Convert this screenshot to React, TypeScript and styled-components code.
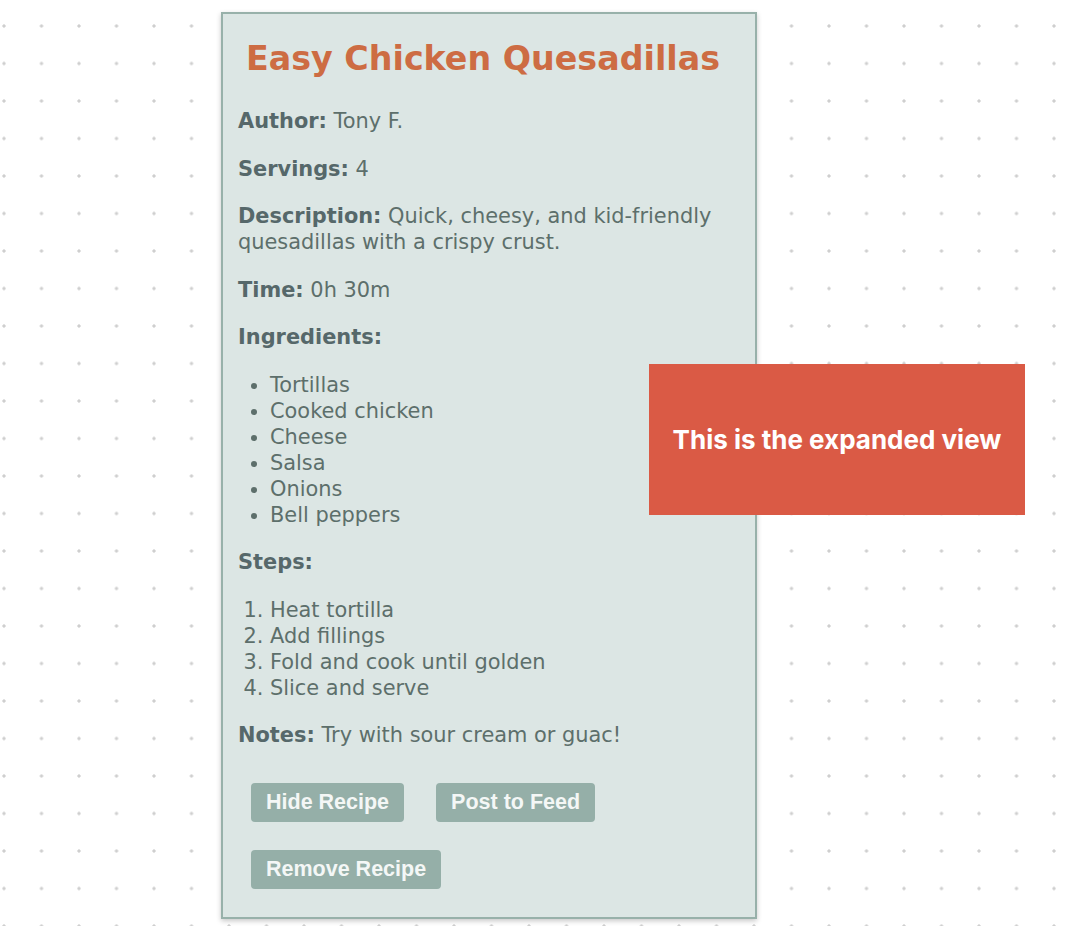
import React from "react";
import styled, { createGlobalStyle } from "styled-components";

const Global = createGlobalStyle`
  html, body {
    margin: 0;
    padding: 0;
  }
  body {
    background-color: #ffffff;
    background-image: radial-gradient(circle, #cfcfcf 1.4px, transparent 1.8px);
    background-size: 37.5px 37.5px;
    background-position: -14.75px 7.25px;
    min-height: 926px;
    font-family: "DejaVu Sans", "Liberation Sans", sans-serif;
  }
`;

const Page = styled.div`
  position: relative;
  width: 1088px;
  min-height: 926px;
  padding: 12px 0 0 221px;
  box-sizing: border-box;
`;

const Card = styled.article`
  width: 536px;
  box-sizing: border-box;
  background: #dce6e4;
  border: 2px solid #98b1aa;
  box-shadow: 0 2px 5px rgba(0, 0, 0, 0.22);
  padding: 22px 15px 28px 15px;
  color: #5d6f6b;
  font-size: 20.9px;
  line-height: 26px;
`;

const Title = styled.h1`
  margin: 0 0 26px 0;
  text-align: center;
  font-size: 33.3px;
  line-height: 46px;
  font-weight: bold;
  color: #cd6c43;
  padding-right: 12px;
`;

const Field = styled.p`
  margin: 0 0 21.5px 0;
`;

const Label = styled.strong`
  font-weight: bold;
  color: #56686a;
`;

const List = styled.ul<{ $ordered?: boolean }>`
  margin: 0 0 21.5px 0;
  padding-left: 32px;
  list-style: ${(p) => (p.$ordered ? "decimal" : "disc")};
`;

const Buttons = styled.div`
  display: flex;
  flex-wrap: wrap;
  gap: 28px 32px;
  margin-top: 35px;
  padding-left: 13px;
  width: 380px;
`;

const Button = styled.button`
  background: #95afa8;
  color: #f4f7f6;
  border: none;
  border-radius: 4px;
  height: 39px;
  padding: 0 15px;
  font-family: "Liberation Sans", Arial, sans-serif;
  font-weight: bold;
  font-size: 21.5px;
  cursor: pointer;
`;

const Overlay = styled.div`
  position: absolute;
  left: 649px;
  top: 364px;
  width: 376px;
  height: 151px;
  background: #da5a45;
  color: #ffffff;
  display: flex;
  align-items: center;
  justify-content: center;
  font-family: Inter, "Liberation Sans", sans-serif;
  font-weight: 700;
  font-size: 26px;
`;

const ingredients = [
  "Tortillas",
  "Cooked chicken",
  "Cheese",
  "Salsa",
  "Onions",
  "Bell peppers",
];

const steps = [
  "Heat tortilla",
  "Add fillings",
  "Fold and cook until golden",
  "Slice and serve",
];

export default function App() {
  return (
    <>
      <Global />
      <Page>
        <Card>
          <Title>Easy Chicken Quesadillas</Title>
          <Field>
            <Label>Author:</Label> Tony F.
          </Field>
          <Field>
            <Label>Servings:</Label> 4
          </Field>
          <Field>
            <Label>Description:</Label> Quick, cheesy, and kid-friendly
            quesadillas with a crispy crust.
          </Field>
          <Field>
            <Label>Time:</Label> 0h 30m
          </Field>
          <Field>
            <Label>Ingredients:</Label>
          </Field>
          <List>
            {ingredients.map((i) => (
              <li key={i}>{i}</li>
            ))}
          </List>
          <Field>
            <Label>Steps:</Label>
          </Field>
          <List as="ol" $ordered>
            {steps.map((s) => (
              <li key={s}>{s}</li>
            ))}
          </List>
          <Field style={{ marginBottom: 0 }}>
            <Label>Notes:</Label> Try with sour cream or guac!
          </Field>
          <Buttons>
            <Button>Hide Recipe</Button>
            <Button>Post to Feed</Button>
            <Button>Remove Recipe</Button>
          </Buttons>
        </Card>
        <Overlay>This is the expanded view</Overlay>
      </Page>
    </>
  );
}
